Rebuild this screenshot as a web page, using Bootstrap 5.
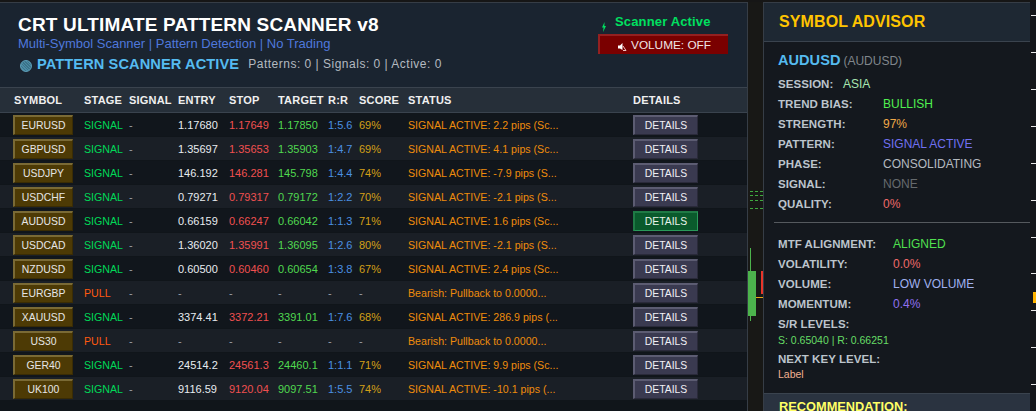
<!doctype html>
<html lang="en">
<head>
<meta charset="utf-8">
<title>CRT Ultimate Pattern Scanner</title>
<link href="https://cdn.jsdelivr.net/npm/bootstrap@5.3.0/dist/css/bootstrap.min.css" rel="stylesheet">
<style>
html,body{height:411px;overflow:hidden;background:#161616;font-family:"Liberation Sans",Arial,sans-serif;font-size:12px;}
.stage{height:411px;padding-top:2px;}
.scan-panel{width:748px;background:#10151a;border-top:1px solid #363d46;border-right:1px solid #363d46;}
.scan-head{height:84px;background:#1a2430;padding:10px 18px 0;position:relative;}
.scan-title{font-size:19px;font-weight:700;color:#fff;line-height:24px;letter-spacing:.17px;}
.scan-sub{font-size:13px;color:#4f78dc;line-height:15px;margin-top:-1px;}
.scan-state{margin-top:3px;height:20px;}
.dot{width:12px;height:12px;border-radius:50%;background:repeating-linear-gradient(45deg,#4a8ba5 0 1px,#3b7389 1px 2px);border:1px solid #5d9fb8;margin:6px 5px 0 2px;}
.state-txt{font-size:14.6px;font-weight:700;color:#55bbf0;line-height:20px;letter-spacing:.1px;}
.state-meta{font-size:12px;color:#b4bac0;margin-left:9px;line-height:21px;letter-spacing:.5px;}
.side-box{position:absolute;left:598px;top:10px;width:130px;}
.act-line{height:21px;color:#00e060;font-weight:700;font-size:13px;line-height:18px;padding-left:17px;position:relative;letter-spacing:.15px;}
.bolt{position:absolute;left:3px;top:9px;}
.vol-box{height:20px;background:#7a0000;border-top:2px solid #942020;border-left:2px solid #942020;color:#f0e6e6;font-size:11.8px;line-height:18px;text-align:center;padding-left:14px;position:relative;}
.mute{position:absolute;left:18px;top:7px;}
.grid-row{display:grid;grid-template-columns:71px 45px 49px 51px 49px 50px 31px 49px 225px 100px;padding-left:13px;align-items:center;}
.head-row{height:26px;background:#262f39;border-top:1px solid #3a434e;border-bottom:1px solid #3a434e;color:#f0f0f0;font-weight:700;font-size:11px;letter-spacing:.2px;}
.head-row span{padding-top:1px;}
.data-row{height:23px;margin-bottom:1px;font-size:11px;background:#11161c;}
.data-row span{padding-top:2px;}
.data-row.alt{background:#1a1f26;}
.head-row span:first-child{padding-left:1px;}
.sym-btn,.det-btn{display:block;padding:0;border-radius:0;font-size:10.4px;line-height:17px;height:20px;text-align:center;}
.sym-btn{width:60px;background:#4d3a05;color:#e6e6e6;border-width:2px 1px 1px 2px;border-style:solid;border-color:#7a6a35 #3a2c04 #3a2c04 #7a6a35;}
.det-btn{width:65px;background:#3a3a50;color:#f0f0f5;border-width:2px 1px 1px 2px;border-style:solid;border-color:#5c5c72 #2a2a3a #2a2a3a #5c5c72;}
.det-btn.on{background:#0a5a2c;border-color:#1f7a45 #2a9a5a #2a9a5a #1f7a45;color:#e8f4ea;}
.sym-btn:hover,.det-btn:hover{color:#fff;}
.c-sig,.c-pull,.c-st{font-size:10.65px;}
.c-sig{color:#00d858;}.c-pull{color:#ff5a10;}.c-dim{color:#9aa0a6;}.c-ent{color:#e8ecf0;}.c-stop{color:#f05050;}.c-tar{color:#50d850;}.c-rr{color:#4a90e2;}.c-sc{color:#d4a017;}.c-st{color:#ee8c0c;}
.gutter{width:15px;position:relative;background:#181816;}
.gutter svg{position:absolute;left:0;top:0;}
.adv-panel{width:267px;height:409px;background:#14181e;border-top:1px solid #363d46;border-left:1px solid #363d46;position:relative;overflow:hidden;}
.adv-head{height:39px;background:#1e2833;border-bottom:1px solid #3a434e;padding:0 15px;font-size:16px;font-weight:700;color:#ffc400;line-height:38px;letter-spacing:.1px;}
.adv-sym{padding:8px 0 0 14px;height:32px;line-height:20px;}
.adv-sym b{font-size:14.6px;color:#55bbf0;}
.adv-sym span{font-size:12px;color:#80868c;margin-left:3px;}
.kv{height:20px;padding-left:14px;line-height:20px;font-size:12px;display:flex;}
.kv b,.kv-lab{font-size:11.5px;color:#bcc4cc;font-weight:700;letter-spacing:.05px;}
.kv b{width:105px;flex:none;}
.kv.wide b{width:115px;}
.kv.auto b{width:65px;}
.rule{height:1px;background:#55595e;margin:8px 0 11px 10px;}
.kv-lab{padding-left:14px;line-height:20px;height:20px;}
.kv-sub{padding-left:14px;font-size:10.5px;line-height:12px;height:15px;color:#66dd66;}
.kv-sub.lab-val{color:#f0b090;line-height:10px;}
.rec{position:absolute;left:0;right:0;top:390px;height:30px;background:#2a3340;border-top:1px solid #3a434e;color:#ffff66;font-weight:700;font-size:12.8px;padding:5px 15px;line-height:16px;}
.axis{flex:1;position:relative;background:#14161a;}
.tick{position:absolute;left:1px;right:0;height:1px;background:#e8e8e8;}
.price-tag{position:absolute;left:3px;right:0;top:290px;height:11px;background:#ffb400;}
</style>
</head>
<body>
<div class="stage d-flex">
  <div class="scan-panel flex-none">
    <div class="scan-head">
      <div class="scan-title">CRT ULTIMATE PATTERN SCANNER v8</div>
      <div class="scan-sub">Multi-Symbol Scanner | Pattern Detection | No Trading</div>
      <div class="scan-state d-flex align-items-start">
        <span class="dot"></span><span class="state-txt">PATTERN SCANNER ACTIVE</span><span class="state-meta">Patterns: 0 | Signals: 0 | Active: 0</span>
      </div>
      <div class="side-box">
        <div class="act-line"><svg class="bolt" width="6" height="10" viewBox="0 0 6 10"><path d="M3.500 0 1 5.500h1.600L2 10l3-6H3.400z" fill="#00e060"/></svg>Scanner Active</div>
        <div class="vol-box"><svg class="mute" width="9" height="8" viewBox="0 0 9 8"><path d="M0 2.500h2L4.500 0v7L2 5.500H0z" fill="#fff"/><path d="m5 3 3 4.500M8 7.500H5" stroke="#f3c0c0" fill="none"/></svg>VOLUME: OFF</div>
      </div>
    </div>
    <div class="grid-row head-row"><span>SYMBOL</span><span>STAGE</span><span>SIGNAL</span><span>ENTRY</span><span>STOP</span><span>TARGET</span><span>R:R</span><span>SCORE</span><span>STATUS</span><span>DETAILS</span></div>
    <div class="grid-row data-row"><button class="btn sym-btn">EURUSD</button><span class="c-sig">SIGNAL</span><span class="c-dim">-</span><span class="c-ent">1.17680</span><span class="c-stop">1.17649</span><span class="c-tar">1.17850</span><span class="c-rr">1:5.6</span><span class="c-sc">69%</span><span class="c-st">SIGNAL ACTIVE: 2.2 pips (Sc...</span><button class="btn det-btn">DETAILS</button></div>
    <div class="grid-row data-row alt"><button class="btn sym-btn">GBPUSD</button><span class="c-sig">SIGNAL</span><span class="c-dim">-</span><span class="c-ent">1.35697</span><span class="c-stop">1.35653</span><span class="c-tar">1.35903</span><span class="c-rr">1:4.7</span><span class="c-sc">69%</span><span class="c-st">SIGNAL ACTIVE: 4.1 pips (Sc...</span><button class="btn det-btn">DETAILS</button></div>
    <div class="grid-row data-row"><button class="btn sym-btn">USDJPY</button><span class="c-sig">SIGNAL</span><span class="c-dim">-</span><span class="c-ent">146.192</span><span class="c-stop">146.281</span><span class="c-tar">145.798</span><span class="c-rr">1:4.4</span><span class="c-sc">74%</span><span class="c-st">SIGNAL ACTIVE: -7.9 pips (S...</span><button class="btn det-btn">DETAILS</button></div>
    <div class="grid-row data-row alt"><button class="btn sym-btn">USDCHF</button><span class="c-sig">SIGNAL</span><span class="c-dim">-</span><span class="c-ent">0.79271</span><span class="c-stop">0.79317</span><span class="c-tar">0.79172</span><span class="c-rr">1:2.2</span><span class="c-sc">70%</span><span class="c-st">SIGNAL ACTIVE: -2.1 pips (S...</span><button class="btn det-btn">DETAILS</button></div>
    <div class="grid-row data-row"><button class="btn sym-btn">AUDUSD</button><span class="c-sig">SIGNAL</span><span class="c-dim">-</span><span class="c-ent">0.66159</span><span class="c-stop">0.66247</span><span class="c-tar">0.66042</span><span class="c-rr">1:1.3</span><span class="c-sc">71%</span><span class="c-st">SIGNAL ACTIVE: 1.6 pips (Sc...</span><button class="btn det-btn on">DETAILS</button></div>
    <div class="grid-row data-row alt"><button class="btn sym-btn">USDCAD</button><span class="c-sig">SIGNAL</span><span class="c-dim">-</span><span class="c-ent">1.36020</span><span class="c-stop">1.35991</span><span class="c-tar">1.36095</span><span class="c-rr">1:2.6</span><span class="c-sc">80%</span><span class="c-st">SIGNAL ACTIVE: -2.1 pips (S...</span><button class="btn det-btn">DETAILS</button></div>
    <div class="grid-row data-row"><button class="btn sym-btn">NZDUSD</button><span class="c-sig">SIGNAL</span><span class="c-dim">-</span><span class="c-ent">0.60500</span><span class="c-stop">0.60460</span><span class="c-tar">0.60654</span><span class="c-rr">1:3.8</span><span class="c-sc">67%</span><span class="c-st">SIGNAL ACTIVE: 2.4 pips (Sc...</span><button class="btn det-btn">DETAILS</button></div>
    <div class="grid-row data-row alt"><button class="btn sym-btn">EURGBP</button><span class="c-pull">PULL</span><span class="c-dim">-</span><span class="c-dim">-</span><span class="c-dim">-</span><span class="c-dim">-</span><span class="c-dim">-</span><span class="c-dim">-</span><span class="c-st">Bearish: Pullback to 0.0000...</span><button class="btn det-btn">DETAILS</button></div>
    <div class="grid-row data-row"><button class="btn sym-btn">XAUUSD</button><span class="c-sig">SIGNAL</span><span class="c-dim">-</span><span class="c-ent">3374.41</span><span class="c-stop">3372.21</span><span class="c-tar">3391.01</span><span class="c-rr">1:7.6</span><span class="c-sc">68%</span><span class="c-st">SIGNAL ACTIVE: 286.9 pips (...</span><button class="btn det-btn">DETAILS</button></div>
    <div class="grid-row data-row alt"><button class="btn sym-btn">US30</button><span class="c-pull">PULL</span><span class="c-dim">-</span><span class="c-dim">-</span><span class="c-dim">-</span><span class="c-dim">-</span><span class="c-dim">-</span><span class="c-dim">-</span><span class="c-st">Bearish: Pullback to 0.0000...</span><button class="btn det-btn">DETAILS</button></div>
    <div class="grid-row data-row"><button class="btn sym-btn">GER40</button><span class="c-sig">SIGNAL</span><span class="c-dim">-</span><span class="c-ent">24514.2</span><span class="c-stop">24561.3</span><span class="c-tar">24460.1</span><span class="c-rr">1:1.1</span><span class="c-sc">71%</span><span class="c-st">SIGNAL ACTIVE: 9.9 pips (Sc...</span><button class="btn det-btn">DETAILS</button></div>
    <div class="grid-row data-row alt"><button class="btn sym-btn">UK100</button><span class="c-sig">SIGNAL</span><span class="c-dim">-</span><span class="c-ent">9116.59</span><span class="c-stop">9120.04</span><span class="c-tar">9097.51</span><span class="c-rr">1:5.5</span><span class="c-sc">74%</span><span class="c-st">SIGNAL ACTIVE: -10.1 pips (...</span><button class="btn det-btn">DETAILS</button></div>
  </div>
  <div class="gutter flex-none">
    <svg width="15" height="409" viewBox="0 0 15 409">
      <g stroke="#3fa83f" stroke-dasharray="3 2"><path d="M2 189.500H15M2 193.500H15M2 198.500H15M2 206.500H15"/></g>
      <path d="M2.500 246V319" stroke="#4cb34c"/>
      <rect x="0" y="269" width="8" height="45" fill="#4cb34c"/>
      <rect x="13" y="269" width="2" height="23" fill="#e8352a"/>
      <path d="M8 295.500H15" stroke="#e6a817"/>
    </svg>
  </div>
  <div class="adv-panel flex-none">
    <div class="adv-head">SYMBOL ADVISOR</div>
    <div class="adv-sym"><b>AUDUSD</b><span>(AUDUSD)</span></div>
    <div class="kv auto"><b>SESSION:</b><span style="color:#a8e6b0">ASIA</span></div>
    <div class="kv"><b>TREND BIAS:</b><span style="color:#50f050">BULLISH</span></div>
    <div class="kv"><b>STRENGTH:</b><span style="color:#f0a848">97%</span></div>
    <div class="kv"><b>PATTERN:</b><span style="color:#7070f0">SIGNAL ACTIVE</span></div>
    <div class="kv"><b>PHASE:</b><span style="color:#b4bac0">CONSOLIDATING</span></div>
    <div class="kv"><b>SIGNAL:</b><span style="color:#666a6e">NONE</span></div>
    <div class="kv"><b>QUALITY:</b><span style="color:#f06a6a">0%</span></div>
    <div class="rule"></div>
    <div class="kv wide"><b>MTF ALIGNMENT:</b><span style="color:#50e050">ALIGNED</span></div>
    <div class="kv wide"><b>VOLATILITY:</b><span style="color:#f06a6a">0.0%</span></div>
    <div class="kv wide"><b>VOLUME:</b><span style="color:#a0b0f0">LOW VOLUME</span></div>
    <div class="kv wide"><b>MOMENTUM:</b><span style="color:#9070f0">0.4%</span></div>
    <div class="kv-lab">S/R LEVELS:</div>
    <div class="kv-sub">S: 0.65040 | R: 0.66251</div>
    <div class="kv-lab">NEXT KEY LEVEL:</div>
    <div class="kv-sub lab-val">Label</div>
    <div class="rec">RECOMMENDATION:</div>
  </div>
  <div class="axis">
    <span class="tick" style="top:13px"></span><span class="tick" style="top:50px"></span><span class="tick" style="top:87px"></span><span class="tick" style="top:124px"></span><span class="tick" style="top:161px"></span><span class="tick" style="top:198px"></span><span class="tick" style="top:235px"></span><span class="tick" style="top:271px"></span><span class="tick" style="top:308px"></span><span class="tick" style="top:345px"></span><span class="tick" style="top:382px"></span>
    <span class="price-tag"></span>
  </div>
</div>
</body>
</html>
